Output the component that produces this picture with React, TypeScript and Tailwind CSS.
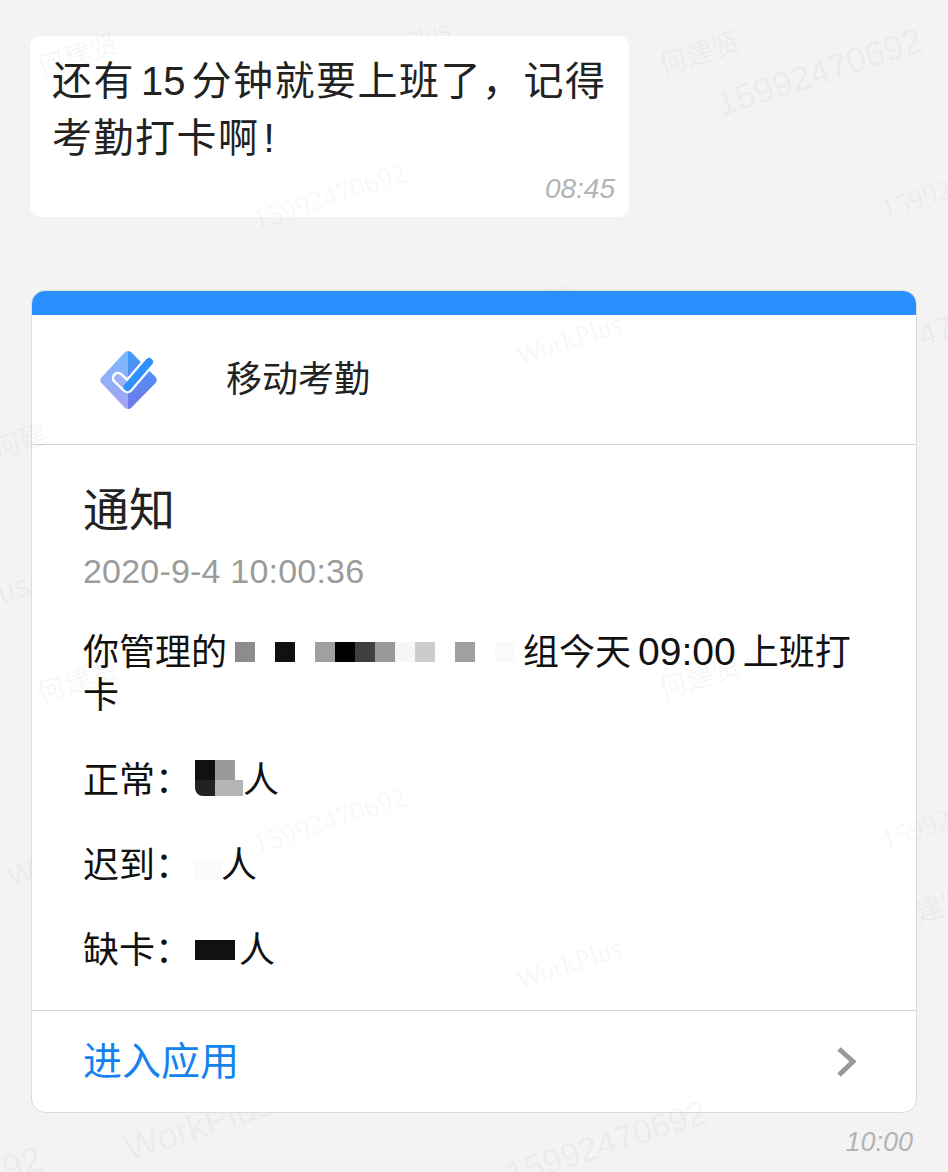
// Attendance notification chat screen
const FONT = "font-['Liberation_Sans','Noto_Sans_CJK_SC',sans-serif]";
const SERIF = "font-['Liberation_Serif','Noto_Sans_CJK_SC',serif]";

// ─── Watermarks ───────────────────────────────────────────────────────────────

// These sit under the bubble and the card, so the cards cut them off
const behindMarks = [
  { text: 'Plus', cls: 'left-[404px] top-[24px] text-[24px] text-black/[0.05]' },
  { text: 'Plus', cls: 'left-[528px] top-[282px] text-[24px] text-black/[0.05]' },
  { text: 'WorkPlus', cls: 'left-[122px] top-[1108px] text-[36px] text-black/[0.05]' },
];

const overMarks = [
  { text: '何建贤', cls: `left-[36px] top-[42px] text-[28px] text-black/[0.05] ${SERIF}` },
  { text: '何建贤', cls: 'left-[658px] top-[40px] text-[28px] text-black/[0.05]' },
  { text: '15992470692', cls: 'left-[712px] top-[54px] text-[35px] text-black/[0.05]' },
  { text: '15992470692', cls: `left-[250px] top-[182px] text-[29px] text-black/[0.04] ${SERIF}` },
  { text: '15992', cls: `left-[880px] top-[185px] text-[29px] text-black/[0.04] ${SERIF}` },
  { text: 'WorkPlus', cls: `left-[514px] top-[326px] text-[28px] text-black/[0.05] ${SERIF}` },
  { text: '47', cls: 'left-[918px] top-[315px] text-[32px] text-black/[0.05]' },
  { text: '何建', cls: 'left-[-8px] top-[428px] text-[28px] text-black/[0.05]' },
  { text: 'us', cls: 'left-[-2px] top-[574px] text-[30px] text-black/[0.05]' },
  { text: '何建贤', cls: 'left-[36px] top-[668px] text-[28px] text-black/[0.05]' },
  { text: '何建贤', cls: 'left-[658px] top-[664px] text-[28px] text-black/[0.05]' },
  { text: '15992470692', cls: `left-[250px] top-[806px] text-[29px] text-black/[0.04] ${SERIF}` },
  { text: '15992', cls: `left-[880px] top-[815px] text-[29px] text-black/[0.04] ${SERIF}` },
  { text: 'W', cls: 'left-[8px] top-[860px] text-[28px] text-black/[0.05]' },
  { text: '建贤', cls: 'left-[914px] top-[892px] text-[28px] text-black/[0.05]' },
  { text: 'WorkPlus', cls: `left-[514px] top-[950px] text-[28px] text-black/[0.05] ${SERIF}` },
  { text: '15992470692', cls: 'left-[502px] top-[1126px] text-[34px] text-black/[0.05]' },
  { text: '92', cls: 'left-[2px] top-[1146px] text-[36px] text-black/[0.05]' },
];

function Watermarks({ marks }: { marks: { text: string; cls: string }[] }) {
  return (
    <div className="pointer-events-none absolute inset-0 overflow-hidden">
      {marks.map((w, i) => (
        <span key={i} className={`absolute -rotate-[18deg] whitespace-nowrap leading-none ${w.cls}`}>
          {w.text}
        </span>
      ))}
    </div>
  );
}

// ─── Logo ─────────────────────────────────────────────────────────────────────

function AppLogo() {
  return (
    <svg width="58" height="58" viewBox="0 0 58 58" fill="none">
      <defs>
        <linearGradient id="logoLeft" x1="28" y1="0" x2="18" y2="50" gradientUnits="userSpaceOnUse">
          <stop offset="0" stopColor="#74bbff" />
          <stop offset="1" stopColor="#a3a6f4" />
        </linearGradient>
        <linearGradient id="logoRight" x1="28" y1="0" x2="28" y2="58" gradientUnits="userSpaceOnUse">
          <stop offset="0" stopColor="#3e9bfa" />
          <stop offset="1" stopColor="#7279ea" />
        </linearGradient>
      </defs>
      <path d="M28 0 L28 58 Q26 58 24.5 56.5 L1.5 32 Q-1 29 1.5 26.5 L24.5 1.5 Q26 0 28 0 Z" fill="url(#logoLeft)" />
      <path d="M28 0 Q30 0 31.5 1.5 L55.5 26 Q58 29 55.5 32 L31.5 56.5 Q30 58 28 58 Z" fill="url(#logoRight)" />
      <path d="M18 27 L27.5 36 L49 11" stroke="#ffffff" strokeWidth="12.5" strokeLinecap="round" strokeLinejoin="round" />
      <path d="M18 27 L27.5 36" stroke="#9db2fa" strokeWidth="7.5" strokeLinecap="round" />
      <path d="M27.5 36 L49 11" stroke="#2f91fb" strokeWidth="8" strokeLinecap="round" />
    </svg>
  );
}

// ─── Redaction mosaic ─────────────────────────────────────────────────────────

const groupTiles = ['bg-[#8c8c8c]', 'bg-white', 'bg-[#111111]', 'bg-white', 'bg-[#a0a0a0]', 'bg-black', 'bg-[#404040]', 'bg-[#999999]', 'bg-[#f6f6f6]', 'bg-[#cccccc]', 'bg-white', 'bg-[#a0a0a0]', 'bg-white', 'bg-[#fafafa]'];

function GroupMosaic() {
  return (
    <span className="mx-[8px] inline-flex h-[20px] align-[3px]">
      {groupTiles.map((t, i) => (
        <span key={i} className={`block h-[20px] w-[20px] ${t}`} />
      ))}
    </span>
  );
}

function StatRow({ label, children }: { label: string; children: React.ReactNode }) {
  return (
    <div className="flex h-[44px] items-center text-[36px] leading-[44px] text-[#111]">
      <span>{label}</span>
      {children}
      <span>人</span>
    </div>
  );
}

// ─── Main export ──────────────────────────────────────────────────────────────

export default function App() {
  return (
    <div className={`relative h-[1172px] w-[948px] overflow-hidden bg-[#f3f3f3] ${FONT}`}>
      <Watermarks marks={behindMarks} />
      <div className="relative flex flex-col pl-[31px] pr-[31px] pt-[36px]">
        {/* Text bubble */}
        <div className="ml-[-1px] flex h-[181px] w-[599px] flex-col rounded-[10px] bg-white pl-[22px] pr-[14px] pt-[17px]">
          <p className="text-[40px] leading-[57px] tracking-[1.5px] text-[#222]">
            还有<span className="mx-[6px] tracking-normal">15</span>分钟就要上班了{'\uFF0C'}记得考勤打卡啊<span className="ml-[4px]">!</span>
          </p>
          <span className="mt-auto mb-[13px] self-end text-[28px] italic leading-[30px] text-[#b4b4b4]">08:45</span>
        </div>

        {/* Notification card */}
        <div className="mt-[73px] flex h-[823px] w-[886px] flex-col overflow-hidden rounded-[14px] border border-[#dcdcdc] bg-white">
          <div className="h-[24px] shrink-0 bg-[#2b90ff]" />
          <div className="flex h-[130px] shrink-0 items-center border-b border-[#d6d6d6] pl-[68px]">
            <AppLogo />
            <span className="ml-[68px] text-[36px] leading-none text-[#222]">移动考勤</span>
          </div>

          <div className="flex flex-1 flex-col border-b border-[#d6d6d6] pl-[51px] pr-[60px] pt-[39px]">
            <h2 className="text-[46px] font-normal leading-[52px] text-[#222]">通知</h2>
            <p className="mt-[16px] text-[34px] leading-[38px] tracking-[0.2px] text-[#9b9b9b]">2020-9-4 10:00:36</p>
            <p className="mt-[40px] text-[36px] leading-[43px] text-[#111]">
              你管理的
              <GroupMosaic />
              组今天<span className="mx-[7px] text-[39px]">09:00</span>上班打卡
            </p>
            <div className="mt-[42px] flex flex-col gap-[41px]">
              <StatRow label={'正常\uFF1A'}>
                <span className="relative mb-[6px] ml-[4px] h-[36px] w-[48px]">
                  <span className="absolute left-0 top-0 h-[20px] w-[20px] bg-[#111111]" />
                  <span className="absolute left-[20px] top-0 h-[20px] w-[20px] bg-[#999999]" />
                  <span className="absolute left-0 top-[20px] h-[16px] w-[20px] rounded-bl-[8px] bg-[#222222]" />
                  <span className="absolute left-[20px] top-[20px] h-[16px] w-[28px] bg-[#b5b5b5]" />
                </span>
              </StatRow>
              <StatRow label={'迟到\uFF1A'}>
                <span className="ml-[4px] mt-[10px] h-[20px] w-[26px] bg-[#fafafa]" />
              </StatRow>
              <StatRow label={'缺卡\uFF1A'}>
                <span className="mb-[2px] ml-[4px] mr-[4px] h-[20px] w-[40px] bg-[#111111]" />
              </StatRow>
            </div>
          </div>

          <div className="flex h-[101px] shrink-0 items-center justify-between pl-[51px] pr-[59px]">
            <span className="text-[39px] leading-none text-[#1482f0]">进入应用</span>
            <svg width="22" height="32" viewBox="0 0 22 32" fill="none">
              <path d="M4 3 L18 15.5 L4 29" stroke="#9a9a9a" strokeWidth="5" />
            </svg>
          </div>
        </div>

        <span className="mt-[14px] self-end pr-[4px] text-[27px] italic leading-[30px] text-[#b4b4b4]">10:00</span>
      </div>
      <Watermarks marks={overMarks} />
    </div>
  );
}
